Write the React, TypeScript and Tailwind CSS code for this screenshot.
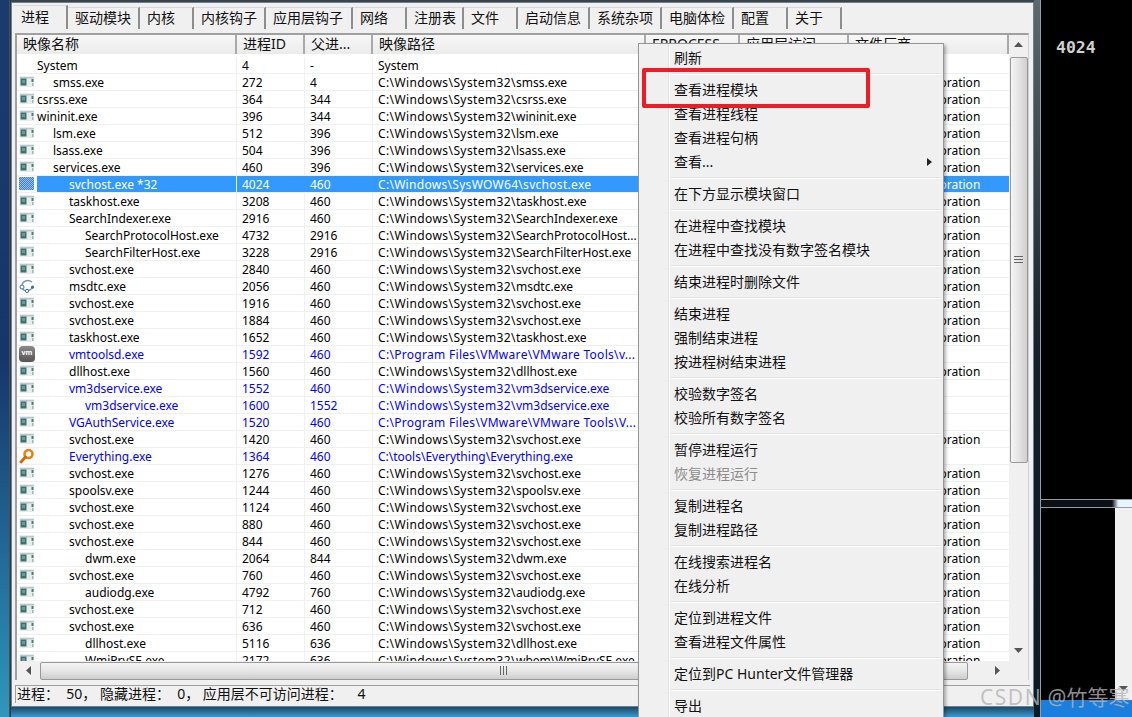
import React from "react";

const sans = "font-['Noto_Sans','Noto_Sans_CJK_SC',sans-serif]";
type P = { n: string; d: number; id: string; pid: string; path: string; co?: boolean; blue?: boolean; icon?: string };
const S = "C:\\Windows\\System32\\";
const rows: P[] = [
  { n: "System", d: 0, id: "4", pid: "-", path: "System", icon: "none" },
  { n: "smss.exe", d: 1, id: "272", pid: "4", path: S + "smss.exe", co: true },
  { n: "csrss.exe", d: 0, id: "364", pid: "344", path: S + "csrss.exe", co: true },
  { n: "wininit.exe", d: 0, id: "396", pid: "344", path: S + "wininit.exe", co: true },
  { n: "lsm.exe", d: 1, id: "512", pid: "396", path: S + "lsm.exe", co: true },
  { n: "lsass.exe", d: 1, id: "504", pid: "396", path: S + "lsass.exe", co: true },
  { n: "services.exe", d: 1, id: "460", pid: "396", path: S + "services.exe", co: true },
  { n: "svchost.exe *32", d: 2, id: "4024", pid: "460", path: "C:\\Windows\\SysWOW64\\svchost.exe", co: true, icon: "sel" },
  { n: "taskhost.exe", d: 2, id: "3208", pid: "460", path: S + "taskhost.exe", co: true },
  { n: "SearchIndexer.exe", d: 2, id: "2916", pid: "460", path: S + "SearchIndexer.exe", co: true },
  { n: "SearchProtocolHost.exe", d: 3, id: "4732", pid: "2916", path: S + "SearchProtocolHost...", co: true },
  { n: "SearchFilterHost.exe", d: 3, id: "3228", pid: "2916", path: S + "SearchFilterHost.exe", co: true },
  { n: "svchost.exe", d: 2, id: "2840", pid: "460", path: S + "svchost.exe", co: true },
  { n: "msdtc.exe", d: 2, id: "2056", pid: "460", path: S + "msdtc.exe", co: true, icon: "net" },
  { n: "svchost.exe", d: 2, id: "1916", pid: "460", path: S + "svchost.exe", co: true },
  { n: "svchost.exe", d: 2, id: "1884", pid: "460", path: S + "svchost.exe", co: true },
  { n: "taskhost.exe", d: 2, id: "1652", pid: "460", path: S + "taskhost.exe", co: true },
  { n: "vmtoolsd.exe", d: 2, id: "1592", pid: "460", path: "C:\\Program Files\\VMware\\VMware Tools\\v...", blue: true, icon: "vm" },
  { n: "dllhost.exe", d: 2, id: "1560", pid: "460", path: S + "dllhost.exe", co: true },
  { n: "vm3dservice.exe", d: 2, id: "1552", pid: "460", path: S + "vm3dservice.exe", blue: true },
  { n: "vm3dservice.exe", d: 3, id: "1600", pid: "1552", path: S + "vm3dservice.exe", blue: true },
  { n: "VGAuthService.exe", d: 2, id: "1520", pid: "460", path: "C:\\Program Files\\VMware\\VMware Tools\\V...", blue: true },
  { n: "svchost.exe", d: 2, id: "1420", pid: "460", path: S + "svchost.exe", co: true },
  { n: "Everything.exe", d: 2, id: "1364", pid: "460", path: "C:\\tools\\Everything\\Everything.exe", blue: true, icon: "ev" },
  { n: "svchost.exe", d: 2, id: "1276", pid: "460", path: S + "svchost.exe", co: true },
  { n: "spoolsv.exe", d: 2, id: "1244", pid: "460", path: S + "spoolsv.exe", co: true },
  { n: "svchost.exe", d: 2, id: "1124", pid: "460", path: S + "svchost.exe", co: true },
  { n: "svchost.exe", d: 2, id: "880", pid: "460", path: S + "svchost.exe", co: true },
  { n: "svchost.exe", d: 2, id: "844", pid: "460", path: S + "svchost.exe", co: true },
  { n: "dwm.exe", d: 3, id: "2064", pid: "844", path: S + "dwm.exe", co: true },
  { n: "svchost.exe", d: 2, id: "760", pid: "460", path: S + "svchost.exe", co: true },
  { n: "audiodg.exe", d: 3, id: "4792", pid: "760", path: S + "audiodg.exe", co: true },
  { n: "svchost.exe", d: 2, id: "712", pid: "460", path: S + "svchost.exe", co: true },
  { n: "svchost.exe", d: 2, id: "636", pid: "460", path: S + "svchost.exe", co: true },
  { n: "dllhost.exe", d: 3, id: "5116", pid: "636", path: S + "dllhost.exe", co: true },
  { n: "WmiPrvSE.exe", d: 3, id: "2172", pid: "636", path: "C:\\Windows\\System32\\wbem\\WmiPrvSE.exe", co: true },
];
const tabs: [string, string][] = [
  ["进程", "w-[54px]"], ["驱动模块", "w-[72px]"], ["内核", "w-[54px]"], ["内核钩子", "w-[72px]"], ["应用层钩子", "w-[87px]"], ["网络", "w-[54px]"],
  ["注册表", "w-[57px]"], ["文件", "w-[54px]"], ["启动信息", "w-[72px]"], ["系统杂项", "w-[72px]"], ["电脑体检", "w-[72px]"], ["配置", "w-[54px]"], ["关于", "w-[54px]"],
];
const menu: (string | null)[] = [
  "刷新", null, "查看进程模块", "查看进程线程", "查看进程句柄", "查看...", null, "在下方显示模块窗口", null,
  "在进程中查找模块", "在进程中查找没有数字签名模块", null, "结束进程时删除文件", null, "结束进程", "强制结束进程", "按进程树结束进程", null,
  "校验数字签名", "校验所有数字签名", null, "暂停进程运行", "恢复进程运行", null, "复制进程名", "复制进程路径", null, "在线搜索进程名", "在线分析", null,
  "定位到进程文件", "查看进程文件属性", null, "定位到PC Hunter文件管理器", null, "导出",
];

function RowIcon({ kind }: { kind?: string }) {
  if (kind === "none") return <span className="w-[16px] h-[16px]" />;
  if (kind === "vm")
    return <span className="w-[16px] h-[16px] rounded-[4px] bg-gradient-to-b from-[#8a8a8a] to-[#555] text-white text-[7px] leading-[14px] text-center font-bold">vm</span>;
  if (kind === "ev")
    return (
      <svg width="16" height="16" viewBox="0 0 16 16" fill="none">
        <circle cx="9.5" cy="6" r="4" stroke="#e8801a" strokeWidth="2.6" />
        <path d="M6.5 9 L2 14" stroke="#d8660c" strokeWidth="3" strokeLinecap="round" />
      </svg>
    );
  if (kind === "net")
    return (
      <svg width="16" height="16" viewBox="0 0 16 16" fill="none">
        <path d="M3 8 C3 3 9 1 13 4" stroke="#6d94c4" strokeWidth="1.4" />
        <path d="M3 10 C5 14 10 13 14 10" stroke="#6d94c4" strokeWidth="1.4" />
        <circle cx="3" cy="9" r="2" fill="#fff" stroke="#3f6fa8" />
        <circle cx="8" cy="13" r="1.6" fill="#fff" stroke="#3f6fa8" />
        <circle cx="13.5" cy="9" r="1.6" fill="#2f6fb5" />
      </svg>
    );
  if (kind === "sel")
    return (
      <svg width="16" height="16" viewBox="0 0 16 16">
        <defs>
          <pattern id="chk" width="2" height="2" patternUnits="userSpaceOnUse">
            <rect width="2" height="2" fill="#9bbfe6" />
            <rect width="1" height="1" fill="#3d7fc4" />
            <rect x="1" y="1" width="1" height="1" fill="#3d7fc4" />
          </pattern>
        </defs>
        <rect y="1" width="15" height="13" fill="url(#chk)" />
      </svg>
    );
  return (
    <svg width="16" height="16" viewBox="0 0 16 16">
      <rect x="0.5" y="2" width="14.5" height="11" fill="#e8ecec" />
      <rect x="1" y="3" width="14" height="1.5" fill="#b8c8d0" />
      <rect x="1.5" y="4.5" width="6" height="7" fill="#3f7268" />
      <rect x="3" y="6" width="3" height="3" fill="#6a9aa0" />
      <rect x="12.5" y="5" width="2" height="3" fill="#43806f" />
      <rect x="13" y="9" width="1.5" height="3" fill="#9db8c0" />
    </svg>
  );
}

function PathText({ path }: { path: string }) {
  if (path.startsWith(S))
    return (
      <span>
        <span className="tracking-[0.4px]">{S}</span>
        {path.slice(S.length)}
      </span>
    );
  if (path.startsWith("C:\\Windows") || path.startsWith("C:\\Program"))
    return <span className="tracking-[0.3px]">{path}</span>;
  return <span>{path}</span>;
}

function Row({ r, sel }: { r: P; sel: boolean }) {
  const txt = sel ? "text-white" : r.blue ? "text-[#0000ff]" : "text-black";
  const cell = `h-full border-r flex items-center pl-[5px] pt-[2px] overflow-hidden whitespace-nowrap ${sel ? "border-[#3399ff] bg-[#3399ff]" : "border-[#f0f0f0]"}`;
  return (
    <div className={`h-[17px] flex shrink-0 border-b border-[#f0f0f0] text-[12px] ${txt}`}>
      <div className="w-[220px] h-full flex items-center border-r border-[#f0f0f0]">
        <span className="w-[20px] pl-[2px] flex shrink-0 items-center"><RowIcon kind={r.icon} /></span>
        <div className={`flex-1 h-full pt-[2px] flex items-center whitespace-nowrap ${sel ? "bg-[#3399ff]" : ""}`}>
          <span style={{ marginLeft: r.d * 16 }}>{r.n}</span>
        </div>
      </div>
      <div className={`w-[68px] ${cell}`}>{r.id}</div>
      <div className={`w-[68px] ${cell}`}>{r.pid}</div>
      <div className={`flex-1 ${cell}`}>
        <PathText path={r.path} />
      </div>
      <div className={`w-[160px] flex items-center pl-[7px] pt-[2px] whitespace-nowrap overflow-hidden ${sel ? "bg-[#3399ff] text-white" : "text-black"}`}>
        {r.co ? "Microsoft Corporation" : ""}
      </div>
    </div>
  );
}

const headCell = "h-full flex items-center pl-[6px] pb-[3px] border-r-2 border-[#a9a9a9] bg-gradient-to-b from-[#f7f7f7] to-[#ebebeb] text-[14px] text-[#111] overflow-hidden whitespace-nowrap";

export default function App() {
  return (
    <div className={`relative w-[1132px] h-[717px] overflow-hidden bg-black flex ${sans}`}>
      {/* window frame: left glass strip, centre column, right strip */}
      <div className="w-[1041px] h-[717px] shrink-0 flex">
        <div className="w-[10px] shrink-0 bg-gradient-to-b from-[#1b3a6e] via-[#16356b] to-[#2f97bd] border-r border-[#44525c]" />
        <div className="w-[1px] shrink-0 bg-[#2d3a44]" />
        <div className="flex-1 min-w-0 flex flex-col">
          <div className="h-[2px] shrink-0 bg-[#39444c]" />
          <div className="flex-1 min-h-0 border border-[#6f7f8c] bg-[#f0f0f0] flex flex-col pl-[1px] pr-[2px]">
            {/* tabs */}
            <div className="h-[26px] shrink-0 flex items-end pl-[1px] text-[14px] text-[#111]">
              {tabs.map(([t, w], i) => (
                <div
                  key={t}
                  className={`${w} ${i === 0 ? "h-[24px] pb-[3px]" : "h-[22px] pb-[2px]"} shrink-0 flex items-center pl-[7px] border-r-2 border-[#8d8d8d] border-t border-t-[#d8d8d8] bg-[#f0f0f0] whitespace-nowrap`}
                >
                  {t}
                </div>
              ))}
            </div>
            {/* list panel */}
            <div className="flex-1 min-h-0 flex flex-col ml-[2px] mt-[4px] mr-[2px] border-t-2 border-l-2 border-[#a0a0a0] border-r border-r-[#d0d0d0] bg-white">
              <div className="flex-1 min-h-0 flex">
                <div className="flex-1 min-w-0 flex flex-col overflow-hidden">
                  <div className="h-[19px] shrink-0 flex">
                    <div className={`w-[220px] ${headCell}`}>映像名称</div>
                    <div className={`w-[68px] ${headCell}`}>进程ID</div>
                    <div className={`w-[68px] ${headCell}`}>父进...</div>
                    <div className={`w-[273px] ${headCell}`}>映像路径</div>
                    <div className={`w-[94px] ${headCell}`}>EPROCESS</div>
                    <div className={`w-[109px] ${headCell}`}>应用层访问</div>
                    <div className={`flex-1 ${headCell}`}>文件厂商</div>
                  </div>
                  <div className="h-[3px] shrink-0" />
                  <div className="flex-1 min-h-0 overflow-hidden flex flex-col">
                    {rows.map((r, i) => (
                      <Row key={i} r={r} sel={i === 7} />
                    ))}
                  </div>
                </div>
                {/* vertical scrollbar */}
                <div className="w-[19px] shrink-0 bg-[#f0f0f0] flex flex-col items-center text-[#666]">
                  <div className="h-[19px] flex items-center justify-center">
                    <svg width="9" height="6" viewBox="0 0 9 6"><path d="M4.5 0 L9 5 H0 Z" fill="#555" /></svg>
                  </div>
                  <div className="w-[18px] h-[406px] mt-[3px] rounded-[2px] border border-[#999] bg-gradient-to-r from-[#f4f4f4] via-[#e4e4e4] to-[#cfcfcf] flex items-center justify-center">
                    <svg width="9" height="8" viewBox="0 0 9 8"><path d="M0 .5H9M0 3.5H9M0 6.5H9" stroke="#666" /></svg>
                  </div>
                  <div className="flex-1" />
                  <div className="h-[19px] flex items-center justify-center mb-[1px]">
                    <svg width="9" height="6" viewBox="0 0 9 6"><path d="M4.5 5 L9 0 H0 Z" fill="#555" /></svg>
                  </div>
                </div>
              </div>
              {/* horizontal scrollbar */}
              <div className="h-[19px] shrink-0 bg-[#f0f0f0] flex items-center">
                <div className="w-[23px] flex justify-center">
                  <svg width="6" height="9" viewBox="0 0 6 9"><path d="M0 4.5 L5 0 V9 Z" fill="#555" /></svg>
                </div>
                <div className="w-[928px] h-[18px] rounded-[2px] border border-[#999] bg-gradient-to-b from-[#f4f4f4] via-[#e6e6e6] to-[#cdcdcd] flex items-center justify-center">
                  <svg width="8" height="9" viewBox="0 0 8 9"><path d="M.5 0V9M3.5 0V9M6.5 0V9" stroke="#666" /></svg>
                </div>
                <div className="flex-1 flex justify-center pr-[3px]">
                  <svg width="6" height="9" viewBox="0 0 6 9"><path d="M6 4.5 L1 0 V9 Z" fill="#555" /></svg>
                </div>
              </div>
            </div>
            {/* status */}
            <div className="h-[18px] shrink-0 mt-[5px] mb-[3px] ml-[2px] mr-[1px] pb-[2px] border-l border-t border-[#a0a0a0] flex items-center pl-[1px] text-[14px] text-[#111] whitespace-pre">
              {"进程：  50， 隐藏进程：  0， 应用层不可访问进程：    4"}
            </div>
          </div>
          <div className="h-[10px] shrink-0 bg-gradient-to-b from-[#1c4a68] to-[#3a9ad0]" />
        </div>
        <div className="w-[7px] shrink-0 bg-gradient-to-b from-[#5e686f] via-[#141f27] to-[#0d1a22] border-r border-[#8fa0aa]" />
      </div>
      {/* right side */}
      <div className="flex-1 flex flex-col min-w-0">
        <div className="h-[499px] shrink-0 pt-[39px] pl-[15px] font-['DejaVu_Sans_Mono',monospace] font-bold text-[16.5px] text-[#cfcfcf] leading-[18px]">4024</div>
        <div className="h-[9px] shrink-0 bg-[linear-gradient(to_right,#0a1016_0%,#0a1016_78%,#e4f6ff_85%,#e4f6ff_100%)] border-y border-[#9a9a9a]" />
        <div className="flex-1 flex min-h-0">
          <div className="flex-1" />
          <div className="w-[17px] bg-[#f0f0f0] flex flex-col items-center justify-end pb-[9px]">
            <svg width="9" height="5" viewBox="0 0 9 5"><path d="M4.5 5 L9 0 H0 Z" fill="#555" /></svg>
          </div>
        </div>
        <div className="h-[17px] shrink-0 bg-[#1a7fdc]" />
      </div>

      {/* context menu */}
      <div className="absolute left-[638px] top-[43px] w-[306px] h-[700px] bg-[#f0f0f0] border border-[#979797] shadow-[2px_2px_3px_rgba(0,0,0,0.3)] pt-[2px] text-[14px] text-[#111] flex flex-col">
        <div className="absolute left-[29px] top-0 bottom-0 w-[2px] bg-[#e2e2e2] border-r border-white" />
        {menu.map((m, i) =>
          m === null ? (
            <div key={i} className="h-[8px] shrink-0 ml-[32px] mr-[2px] flex items-center"><div className="w-full h-[2px] bg-[#e2e2e2] border-b border-white" /></div>
          ) : (
            <div key={i} className={`h-[24px] shrink-0 pl-[35px] pb-[2px] flex items-center whitespace-nowrap relative ${m === "恢复进程运行" ? "text-[#8d8d8d]" : ""}`}>
              {m}
              {m === "查看..." && (
                <svg className="absolute right-[11px] top-[8px]" width="5" height="8" viewBox="0 0 5 8"><path d="M0 0 L5 4 L0 8 Z" fill="#222" /></svg>
              )}
            </div>
          ),
        )}
      </div>
      {/* annotation */}
      <div className="absolute left-[642px] top-[68px] w-[228px] h-[40px] border-4 border-[#ee1c25] rounded-[2px]" />
      {/* watermark */}
      <div className="absolute left-[980px] top-[683px] text-[21px] leading-[28px] text-[#b4b4b4]/80 whitespace-pre">
        <span className="tracking-[1.5px]">CSDN</span> @竹等寒
      </div>
    </div>
  );
}
